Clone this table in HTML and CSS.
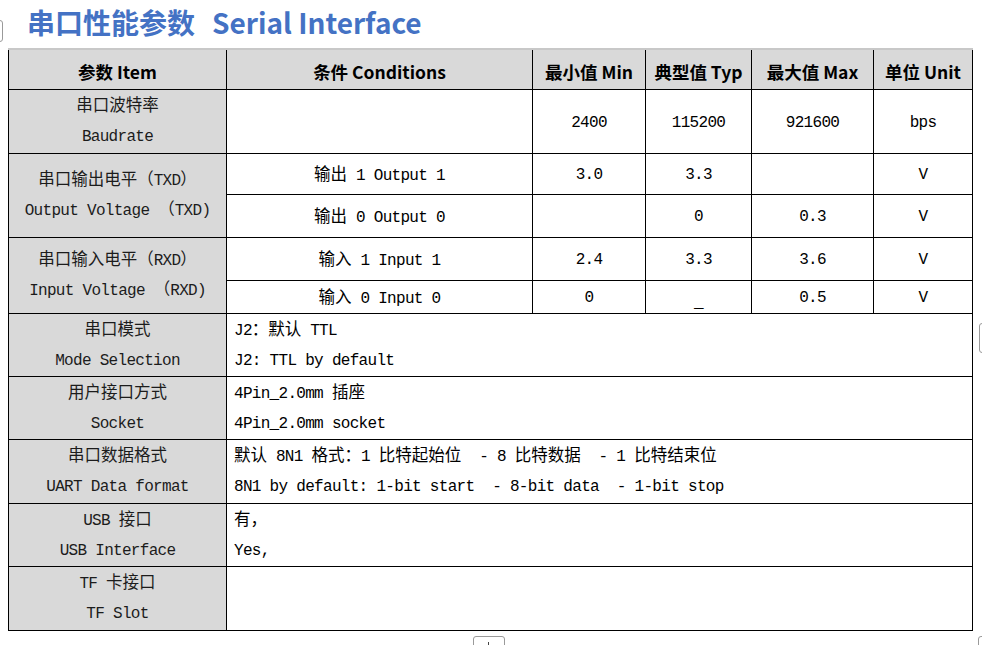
FILE: index.html
```html
<!DOCTYPE html>
<html lang="zh-CN">
<head>
<meta charset="utf-8">
<title>串口性能参数 Serial Interface</title>
<link rel="stylesheet" href="styles.css">
</head>
<body>
<div class="page">
  <h1 class="title"><span>串口性能参数</span><span class="title-en">Serial Interface</span></h1>
  <table class="spec">
    <colgroup>
      <col class="c1"><col class="c2"><col class="c3"><col class="c4"><col class="c5"><col class="c6">
    </colgroup>
    <thead>
      <tr class="h40">
        <th>参数 Item</th><th>条件 Conditions</th><th>最小值 Min</th><th>典型值 Typ</th><th>最大值 Max</th><th>单位 Unit</th>
      </tr>
    </thead>
    <tbody>
      <tr class="h64">
        <td class="label"><div class="ln"><span class="zh">串口波特率</span></div><div class="ln">Baudrate</div></td>
        <td></td><td>2400</td><td>115200</td><td>921600</td><td>bps</td>
      </tr>
      <tr class="h41">
        <td class="label" rowspan="2"><div class="ln"><span class="zh">串口输出电平（</span>TXD<span class="zh">）</span></div><div class="ln">Output Voltage <span class="zh">（</span>TXD)</div></td>
        <td><span class="zh">输出</span> 1 Output 1</td><td>3.0</td><td>3.3</td><td></td><td>V</td>
      </tr>
      <tr class="h43">
        <td><span class="zh">输出</span> 0 Output 0</td><td></td><td>0</td><td>0.3</td><td>V</td>
      </tr>
      <tr class="h43">
        <td class="label" rowspan="2"><div class="ln"><span class="zh">串口输入电平（</span>RXD<span class="zh">）</span></div><div class="ln">Input Voltage <span class="zh">（</span>RXD)</div></td>
        <td><span class="zh">输入</span> 1 Input 1</td><td>2.4</td><td>3.3</td><td>3.6</td><td>V</td>
      </tr>
      <tr class="h32">
        <td><span class="zh">输入</span> 0 Input 0</td><td>0</td><td class="under">_</td><td>0.5</td><td>V</td>
      </tr>
      <tr class="h63">
        <td class="label"><div class="ln"><span class="zh">串口模式</span></div><div class="ln">Mode Selection</div></td>
        <td class="text" colspan="5"><div class="ln">J2<span class="zh">：默认</span> TTL</div><div class="ln">J2: TTL by default</div></td>
      </tr>
      <tr class="h63">
        <td class="label"><div class="ln"><span class="zh">用户接口方式</span></div><div class="ln">Socket</div></td>
        <td class="text" colspan="5"><div class="ln">4Pin_2.0mm <span class="zh">插座</span></div><div class="ln">4Pin_2.0mm socket</div></td>
      </tr>
      <tr class="h64">
        <td class="label"><div class="ln"><span class="zh">串口数据格式</span></div><div class="ln">UART Data format</div></td>
        <td class="text" colspan="5"><div class="ln"><span class="zh">默认</span> 8N1 <span class="zh">格式：</span>1 <span class="zh">比特起始位</span>  - 8 <span class="zh">比特数据</span>  - 1 <span class="zh">比特结束位</span></div><div class="ln">8N1 by default: 1-bit start  - 8-bit data  - 1-bit stop</div></td>
      </tr>
      <tr class="h63">
        <td class="label"><div class="ln">USB <span class="zh">接口</span></div><div class="ln">USB Interface</div></td>
        <td class="text" colspan="5"><div class="ln"><span class="zh">有，</span></div><div class="ln">Yes,</div></td>
      </tr>
      <tr class="h64">
        <td class="label"><div class="ln">TF <span class="zh">卡接口</span></div><div class="ln">TF Slot</div></td>
        <td class="text" colspan="5"></td>
      </tr>
    </tbody>
  </table>
</div>
<div class="handle handle-left"></div>
<div class="handle handle-right"></div>
<div class="handle handle-add"><span class="plus"></span></div>
<div class="handle handle-corner"></div>
</body>
</html>
```

FILE: styles.css
```css
* { box-sizing: border-box; }

html, body {
  margin: 0;
  background: #ffffff;
}

body {
  position: relative;
  width: 982px;
  height: 645px;
  overflow: hidden;
}

.page {
  padding: 4px 8px 0 8px;
}

.title {
  display: flex;
  gap: 17px;
  margin: 0 0 8px 19px;
  font-family: "Noto Sans CJK SC", "Noto Sans", sans-serif;
  font-weight: 700;
  font-size: 28px;
  line-height: 36px;
  color: #4472c4;
  white-space: nowrap;
}

.spec {
  width: 964px;
  table-layout: fixed;
  border-collapse: collapse;
  border-top: 2px solid #c8c8c8;
  font-family: "Liberation Mono", "Noto Sans CJK SC", monospace;
  font-size: 16px;
  letter-spacing: -0.7px;
  color: #000000;
}

.c1 { width: 218px; }
.c2 { width: 306px; }
.c3 { width: 113px; }
.c4 { width: 106px; }
.c5 { width: 122px; }
.c6 { width: 99px; }

.spec th,
.spec td {
  border: 1px solid #000000;
  padding: 3px 0 0 0;
  text-align: center;
  vertical-align: middle;
  white-space: pre;
  line-height: 20px;
}

.spec th {
  background: #d9d9d9;
  font-family: "Noto Sans CJK SC", "Noto Sans", sans-serif;
  font-weight: 700;
  font-size: 17.5px;
  letter-spacing: 0;
  color: #000000;
  padding-top: 5px;
}

.spec td.label,
.spec td.text {
  padding-top: 2px;
}

.spec td.label {
  background: #d9d9d9;
  color: #1c1c1c;
}

.spec td.text {
  text-align: left;
  padding-left: 7px;
}

.spec td.under {
  padding-top: 12px;
}

.ln {
  line-height: 30px;
}

.zh {
  font-family: "Noto Sans CJK SC", sans-serif;
  font-size: 16.5px;
  font-weight: 400;
  letter-spacing: 0;
  line-height: 1;
}

.h40 { height: 40px; }
.h64 { height: 64px; }
.h63 { height: 63px; }
.h41 { height: 41px; }
.h43 { height: 43px; }
.h32 { height: 32px; }

/* editor handles that float over the page */
.handle {
  position: absolute;
  border: 1px solid #9a9a9a;
  border-radius: 3px;
  background: #ffffff;
}

.handle-left {
  left: -6px;
  top: 20px;
  width: 9px;
  height: 22px;
}

.handle-right {
  left: 979px;
  top: 323px;
  width: 9px;
  height: 30px;
}

.handle-add {
  left: 473px;
  top: 636px;
  width: 32px;
  height: 16px;
}

.plus {
  position: absolute;
  left: 14px;
  top: 5px;
  width: 1px;
  height: 8px;
  background: #444;
}

.handle-corner {
  left: 978px;
  top: 636px;
  width: 12px;
  height: 16px;
}
```
